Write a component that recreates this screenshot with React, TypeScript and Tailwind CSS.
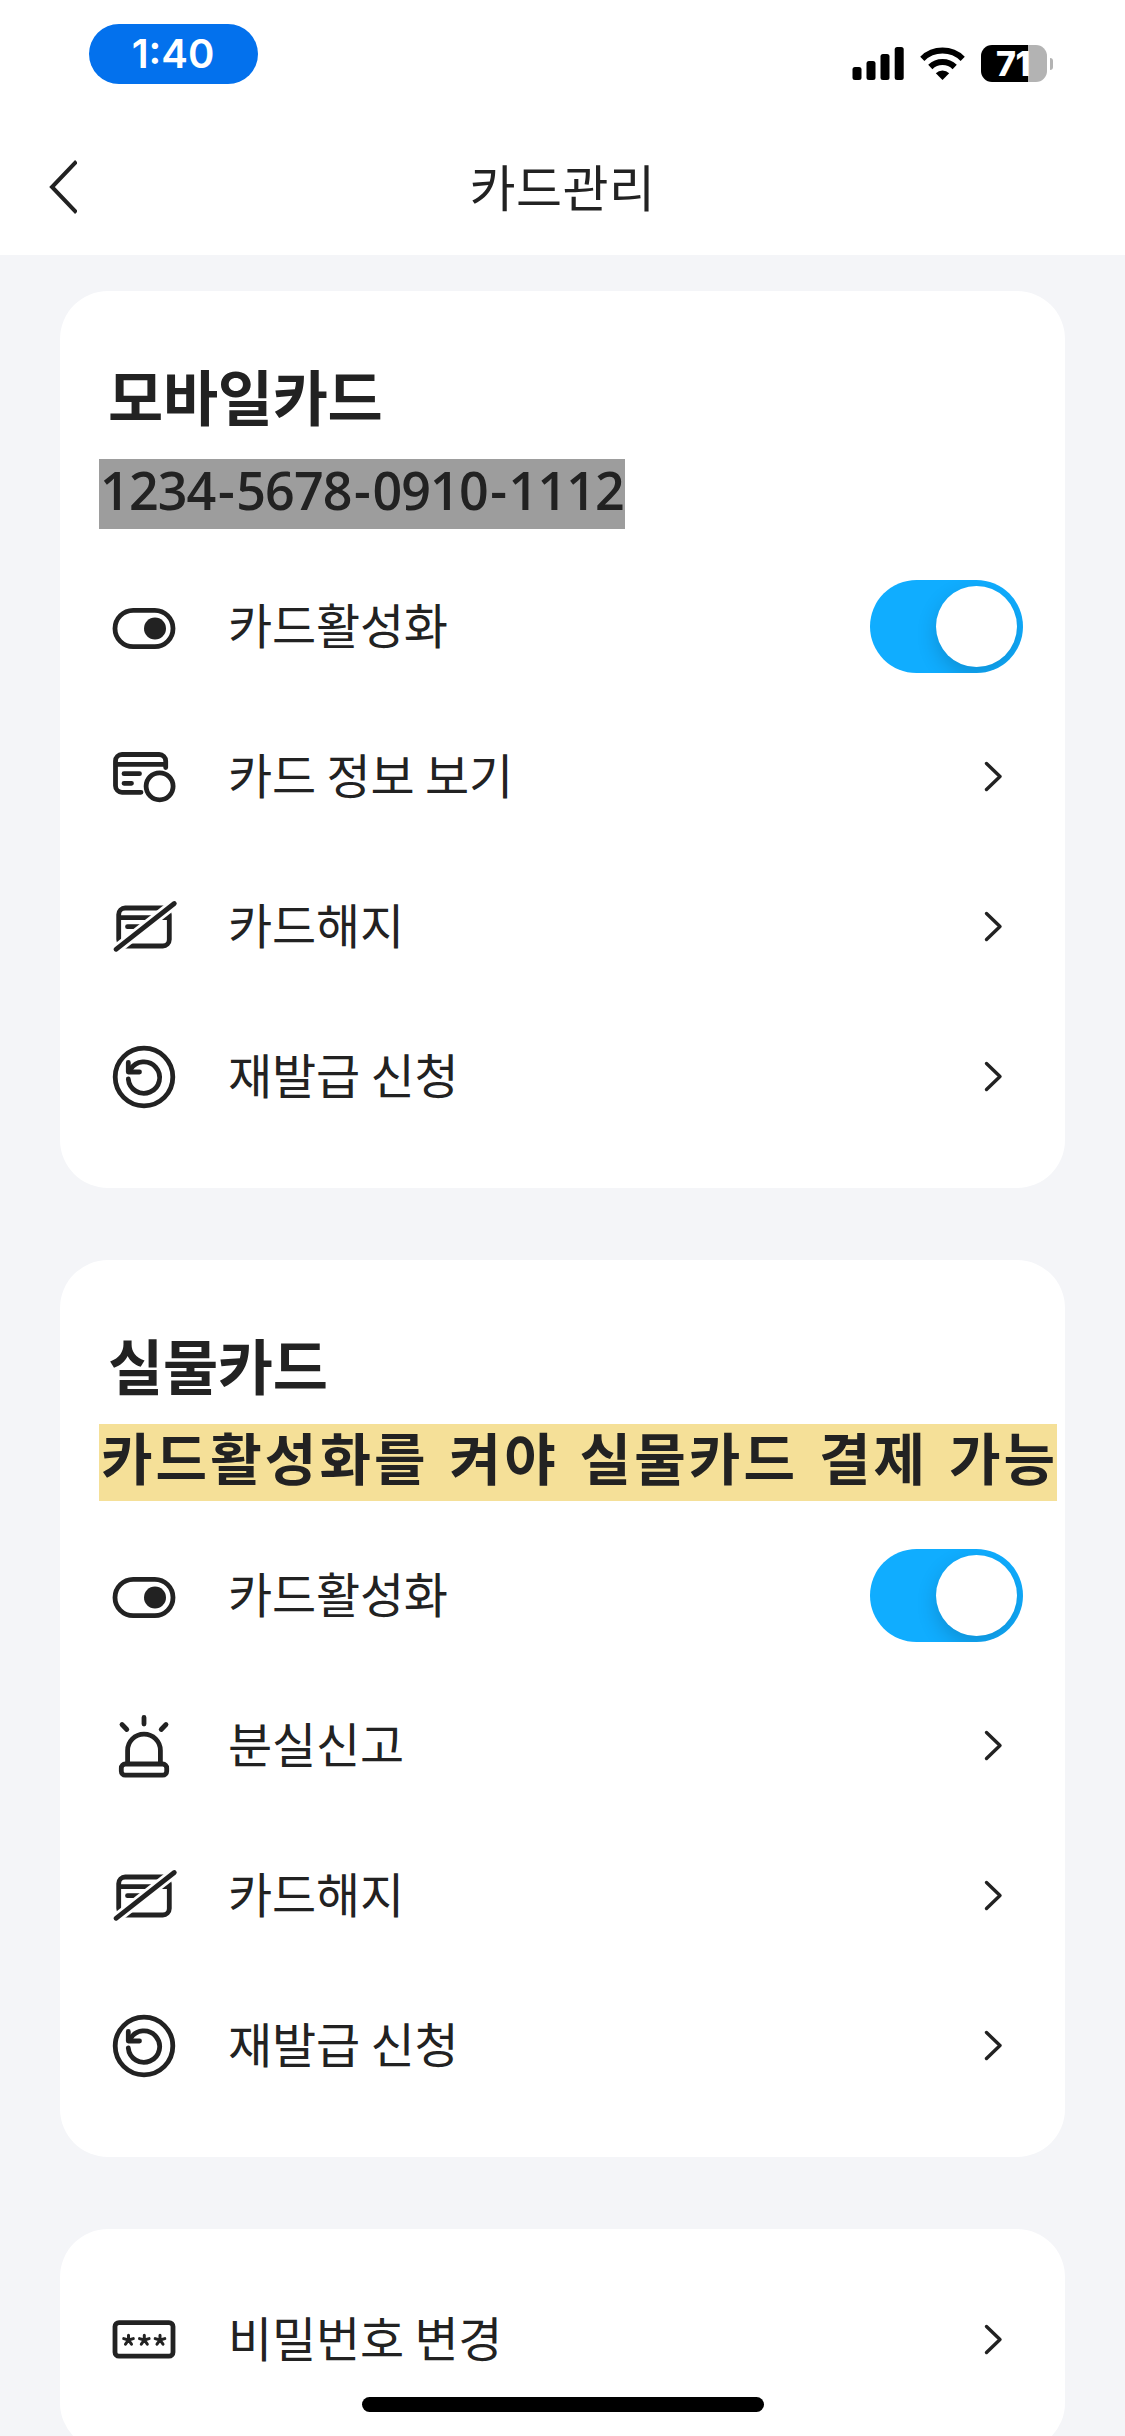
import type { ReactNode } from "react";

function Icon({ children }: { children: ReactNode }) {
  return (
    <svg
      viewBox="0 0 72 72"
      className="block h-[72px] w-[72px] shrink-0"
      fill="none"
      stroke="#222222"
      strokeWidth="4.8"
      strokeLinecap="round"
      strokeLinejoin="round"
    >
      {children}
    </svg>
  );
}

function ToggleIcon() {
  return (
    <Icon>
      <rect x="7" y="18.3" width="58" height="36.4" rx="18.2" />
      <circle cx="47" cy="36.500" r="11" fill="#222222" stroke="none" />
    </Icon>
  );
}

function CardInfoIcon() {
  return (
    <Icon>
      <path d="M33 51.300H14a6.500 6.500 0 0 1-6.500-6.500V20a6.500 6.500 0 0 1 6.500-6.500h37.200a6.500 6.500 0 0 1 6.500 6.500V26.500" />
      <path d="M8 23.300H57M16 32.700H31.500M16 42.300H23.500" />
      <circle cx="51.600" cy="45.300" r="13.500" />
    </Icon>
  );
}

function CancelIcon() {
  return (
    <Icon>
      <rect x="10.700" y="17" width="50.600" height="38" rx="6.500" />
      <path d="M12 26.700H60M19.500 35.700H32" />
      <path d="M4 61.700L70.300 9.400" stroke="#ffffff" strokeWidth="10.500" strokeLinecap="butt" />
      <path d="M8 58.300L66.300 12.500" />
    </Icon>
  );
}

function ReissueIcon() {
  return (
    <Icon>
      <circle cx="36" cy="36" r="28.800" />
      <path d="M20.300 38A15.700 15.700 0 1 0 22.500 28.500" />
      <path d="M20.300 21.500V31H31.500" />
    </Icon>
  );
}

function SirenIcon() {
  return (
    <Icon>
      <rect x="13.300" y="54" width="45.400" height="11.200" rx="4" />
      <path d="M19.600 53.500V40.500a16.400 16.400 0 0 1 32.800 0V53.500" />
      <path d="M36 7.500V14M14 14.500L18.800 19.500M58 14.500L53.200 19.500" />
    </Icon>
  );
}

function PasswordIcon() {
  return (
    <Icon>
      <rect x="7" y="18.600" width="58" height="33.600" rx="4" />
      {[20.5, 36.3, 52].map((x) => (
        <g key={x} transform={`translate(${x} 36)`} strokeWidth="3">
          <path d="M0 0V-4.800M0 0L4.800 -1.400M0 0L3 4.200M0 0L-3 4.200M0 0L-4.800 -1.400" />
        </g>
      ))}
    </Icon>
  );
}

function Chevron() {
  return (
    <svg
      viewBox="0 0 20 32"
      className="mr-[42px] mb-0.5 block h-8 w-5"
      fill="none"
      stroke="#222222"
      strokeWidth="3.4"
      strokeLinecap="round"
      strokeLinejoin="round"
    >
      <path d="M3.500 3.500L17 16.500L3.500 29.500" />
    </svg>
  );
}

function Switch() {
  return (
    <div className="mr-[22px] mb-0.5 flex h-[93px] w-[153px] items-center justify-end overflow-hidden rounded-full bg-[#10adff] pr-[6px]">
      <div className="size-[81px] rounded-full bg-white shadow-[0_8px_20px_rgba(0,0,0,0.17)]" />
    </div>
  );
}

function Row({ icon, label, toggle }: { icon: ReactNode; label: string; toggle?: boolean }) {
  return (
    <div className="flex h-[150px] items-center pl-12 pr-5">
      <div className={toggle ? "pt-0.5" : ""}>{icon}</div>
      <span className="mb-[9px] ml-12 flex-1 text-[48px] leading-[72px] tracking-[-0.2px] whitespace-nowrap">{label}</span>
      {toggle ? <Switch /> : <Chevron />}
    </div>
  );
}

export default function App() {
  return (
    <div className="relative h-[2436px] w-[1125px] overflow-hidden bg-[#f4f5f8] font-['Noto_Sans_CJK_KR',sans-serif] text-[#222222]">
      <header className="h-[255px] bg-white">
        <div className="flex h-[132px] items-start justify-between pl-[89px] pr-[72px]">
          <div className="mt-6 flex h-[60px] w-[169px] items-center justify-center rounded-full bg-[#0371ed] pr-px font-['Inter',sans-serif] text-[40px] font-semibold text-white">
            1:40
          </div>
          <div className="mt-[45px] flex">
            <svg viewBox="0 0 52 36" className="h-9 w-[52px]">
              <rect x="0.500" y="22" width="9" height="13" rx="2.500" />
              <rect x="14.500" y="16" width="9" height="19" rx="2.500" />
              <rect x="28.500" y="9" width="9" height="26" rx="2.500" />
              <rect x="42.700" y="2" width="9" height="33" rx="2.500" />
            </svg>
            <svg viewBox="0 0 45 36" className="ml-4 h-9 w-[45px]">
              <path d="M22.500 35L15.800 28.200A10 10 0 0 1 29.200 28.200Z" />
              <path d="M10.300 22A17.500 17.500 0 0 1 34.700 22" fill="none" stroke="#000" strokeWidth="6" />
              <path d="M2.300 13.800A29 29 0 0 1 42.700 13.800" fill="none" stroke="#000" strokeWidth="6" />
            </svg>
            <div className="ml-4 flex items-center">
              <div className="flex h-[37px] w-[66px] items-center justify-center rounded-[11px] bg-[linear-gradient(to_right,#000_47px,#b3b3b3_47px)] pr-0.5 font-['Inter',sans-serif] text-[34px] leading-none font-extrabold tracking-[-0.5px] text-white">
                71
              </div>
              <div className="ml-[3px] h-3 w-[3px] rounded-r-full bg-[#b3b3b3]" />
            </div>
          </div>
        </div>
        <div className="flex h-[112px] items-center">
          <svg viewBox="0 0 29 56" className="ml-12 mb-0.5 h-14 w-[29px]" fill="none" stroke="#222222" strokeWidth="4">
            <path d="M28.500 2.500L4 28L28.500 53.500" />
          </svg>
          <h1 className="flex-1 pr-[77px] pb-[6px] text-center text-[50px] font-normal tracking-[0.5px]">카드관리</h1>
        </div>
      </header>

      <main className="flex flex-col gap-[72px] px-[60px] pt-9">
        <section className="h-[897px] rounded-[48px] bg-white">
          <div className="flex h-[261px] flex-col items-start pl-[39px]">
            <h2 className="mt-[62px] ml-[9px] h-[84px] text-[60px] leading-[84px] font-bold tracking-[-0.3px]">모바일카드</h2>
            <div className="mt-[22px] flex h-[70px] w-[526px] items-center justify-center bg-[#9d9d9d] pb-2 font-['Open_Sans',sans-serif] text-[52px] leading-[64px] font-semibold tracking-[-0.9px] whitespace-nowrap">
              1234<span className="px-[2.5px]">-</span>5678<span className="px-[2.5px]">-</span>0910
              <span className="px-[2.5px]">-</span>1112
            </div>
          </div>
          <Row icon={<ToggleIcon />} label="카드활성화" toggle />
          <Row icon={<CardInfoIcon />} label="카드 정보 보기" />
          <Row icon={<CancelIcon />} label="카드해지" />
          <Row icon={<ReissueIcon />} label="재발급 신청" />
        </section>

        <section className="h-[897px] rounded-[48px] bg-white">
          <div className="flex h-[261px] flex-col items-start pl-[39px]">
            <h2 className="mt-[62px] ml-[9px] h-[84px] text-[60px] leading-[84px] font-bold tracking-[-0.3px]">실물카드</h2>
            <div className="mt-[18px] flex h-[77px] w-[958px] items-center bg-[#f5e098] pb-[14px] pl-0.5 text-[56px] leading-[63px] font-bold tracking-[3.100px] [word-spacing:5px] whitespace-nowrap">
              카드활성화를 켜야 실물카드 결제 가능
            </div>
          </div>
          <Row icon={<ToggleIcon />} label="카드활성화" toggle />
          <Row icon={<SirenIcon />} label="분실신고" />
          <Row icon={<CancelIcon />} label="카드해지" />
          <Row icon={<ReissueIcon />} label="재발급 신청" />
        </section>

        <section className="h-[222px] shrink-0 rounded-[48px] bg-white pt-9">
          <Row icon={<PasswordIcon />} label="비밀번호 변경" />
        </section>
      </main>

      <div className="absolute bottom-6 left-[362px] h-[15px] w-[402px] rounded-full bg-black" />
    </div>
  );
}
